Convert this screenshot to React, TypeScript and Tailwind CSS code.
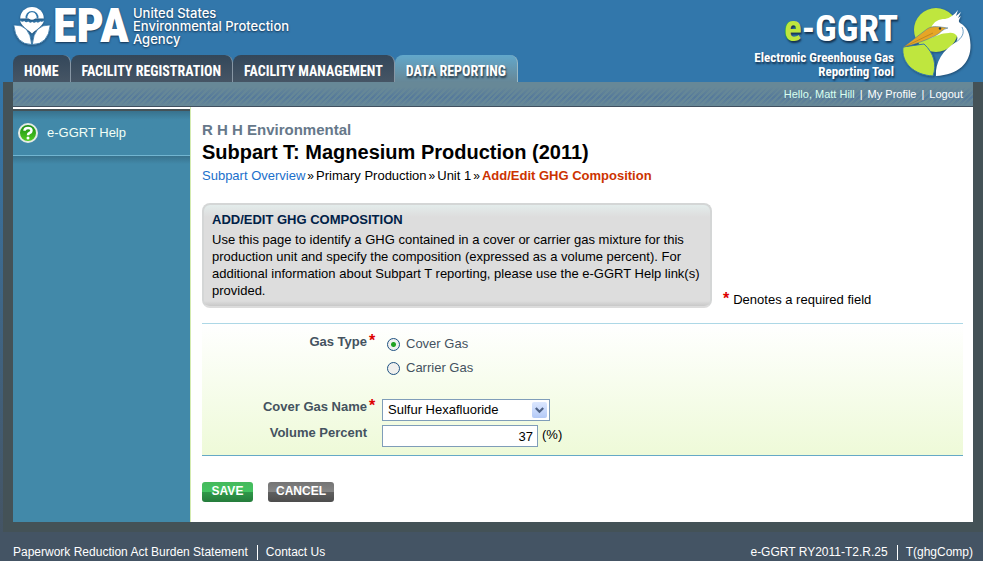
import React from 'react';

const tabs = [
  { label: 'HOME', active: false },
  { label: 'FACILITY REGISTRATION', active: false },
  { label: 'FACILITY MANAGEMENT', active: false },
  { label: 'DATA REPORTING', active: true },
];

const EpaLogo: React.FC = () => (
  <a href="#epa" className="flex text-white" aria-label="United States Environmental Protection Agency">
    <svg width="38" height="40" viewBox="0 0 38 40" className="drop-shadow-[0_1px_1px_rgba(20,50,80,0.6)]" aria-hidden="true">
      <path d="M7.200 12.500A11.800 11.500 0 0 1 19 1a11.800 11.500 0 0 1 11.800 11.500z" fill="#fff" />
      <path d="M13.500 12.500a5.600 5.600 0 1 1 11 0" fill="none" stroke="#3277ab" strokeWidth="1.800" />
      <circle cx="19" cy="10" r="3.800" fill="#fff" />
      <path
        d="M7.200 14.500q2 2.400 4 .6 2 2.200 4 .4 2 2.200 4 .2 2 2 4 0 2 2 4-.4 2 1.400 3.600-.8C30 20 25 22 19 27.500 13 22 8 20 7.200 14.500z"
        fill="#fff"
      />
      <path
        d="M.8 19Q17 18 18.700 38.500 2.500 38.500.8 19zM37.200 19Q21 18 19.300 38.500 35.500 38.500 37.200 19z"
        fill="#fff"
        stroke="#3277ab"
        strokeWidth=".8"
      />
    </svg>
    <span className="w-[80px] text-center font-['Roboto_Condensed','Roboto',sans-serif] text-[48px] leading-[40px] font-black text-shadow-[0_1px_2px_rgb(20_50_80)]">
      EPA
    </span>
    <span className="pt-px pl-[2px] font-['Inter','Liberation_Sans',sans-serif] text-[13px] leading-[13px] font-medium text-shadow-[0_1px_2px_rgb(20_50_80)]">
      United States
      <br />
      Environmental Protection
      <br />
      Agency
    </span>
  </a>
);

const HeronLogo: React.FC = () => (
  <svg width="70" height="72" viewBox="0 0 70 72" className="drop-shadow-[1px_1px_1px_rgba(20,50,80,0.6)]" aria-hidden="true">
    <circle cx="34" cy="23" r="22" fill="#bfe63e" />
    <path d="M1 40C-1 56 12 68 31 69C35 58 32 46 22 37z" fill="#bfe63e" stroke="#3277ab" strokeWidth="1" />
    <path
      d="M29 21C32 14 37 12 43 12C48 11 52 8 56 3L54 9L59 5L56 11L59 9C57 13 56 14 58 16C65 20 68 26 68.500 38C69 56 56 68 34 69C33 55 41 43 54 35C58 30 53 25 47 26C39 26 35 29 26 32z"
      fill="#fff"
    />
    <path d="M54 35C60 31 63 26 60 20" fill="none" stroke="#3277ab" strokeWidth=".7" />
    <path d="M1.500 40L25 22C31 18 38 20 46 21C40 22 39 26 33 29C24 33 12 38 1.500 40z" fill="#e6a526" stroke="#3277ab" strokeWidth=".5" />
    <path d="M3 39.500L31 26" fill="none" stroke="#a8741a" strokeWidth=".6" />
    <circle cx="38" cy="21.500" r="1.200" fill="#243a4c" />
  </svg>
);

const HelpIcon: React.FC = () => (
  <svg width="22" height="22" viewBox="0 0 22 22" aria-hidden="true">
    <defs>
      <linearGradient id="help" x1="0" y1="0" x2="0" y2="1">
        <stop offset="0" stopColor="#188a12" />
        <stop offset="1" stopColor="#53cf22" />
      </linearGradient>
    </defs>
    <circle cx="11" cy="11" r="9" fill="url(#help)" stroke="#e6ece4" strokeWidth="2" />
    <path d="M7.500 8.800Q7.500 6 11 6T14.500 8.700Q14.500 10.200 12.500 11Q11 11.600 11 13.200" fill="none" stroke="#fff" strokeWidth="2.500" />
    <circle cx="11" cy="15.900" r="1.500" fill="#fff" />
  </svg>
);

const Required: React.FC = () => <span className="text-[16px] leading-[14px] font-bold text-[#dd0000]">*</span>;

interface RowProps {
  label: string;
  htmlFor: string;
  required?: boolean;
  children: React.ReactNode;
}

const Row: React.FC<RowProps> = ({ label, htmlFor, required, children }) => (
  <div className="flex items-start">
    <label htmlFor={htmlFor} className="flex w-[175px] shrink-0 justify-end text-[13px] leading-4 font-bold text-[#44525f]">
      {label}
      <span className="flex w-[10px] items-start pl-[2px]">{required && <Required />}</span>
    </label>
    <div className="pl-[5px]">{children}</div>
  </div>
);

const radioClass =
  'size-[13px] appearance-none rounded-full border border-[#1f5282] bg-[#f0f0ee] checked:bg-[radial-gradient(circle,#21a121_0_2px,#f0f0ee_3px)]';

export default function App() {
  return (
    <div className="flex min-h-screen flex-col bg-[#445464] font-['Liberation_Sans',Arial,sans-serif] text-[13px] text-black">
      <header className="flex h-[82px] justify-between bg-[#3277ab] pr-[11px] pl-[13px]">
        <div className="flex flex-col justify-between">
          <div className="pt-[6px]">
            <EpaLogo />
          </div>
          <nav className="flex font-['Roboto_Condensed','Roboto',sans-serif] text-[14px] font-bold text-white">
            {tabs.map((tab) => (
              <a
                key={tab.label}
                href="#tab"
                className={
                  tab.active
                    ? 'flex h-[27px] items-center rounded-t-lg border-r border-[#9bb9c4] bg-linear-to-b from-[#62a8cb] to-[#668797] px-[11px] pt-[5px] whitespace-nowrap text-shadow-[1px_2px_2px_rgb(40_60_75)]'
                    : 'flex h-[27px] items-center rounded-t-lg border-r border-[#8796a4] bg-linear-to-b from-[#33475a] to-[#465565] px-[11px] pt-[5px] whitespace-nowrap'
                }
              >
                {tab.label}
              </a>
            ))}
          </nav>
        </div>
        <div className="flex gap-1 pt-[7px] text-white">
          <div className="text-right font-['Roboto_Condensed','Roboto',sans-serif] font-bold text-shadow-[1px_2px_2px_rgb(20_50_80)]">
            <div className="text-[37px] leading-[44px]">
              <span className="text-[#bfe63e]">e</span>-GGRT
            </div>
            <div className="pr-1 text-[13px] leading-[14px]">
              Electronic Greenhouse Gas
              <br />
              Reporting Tool
            </div>
          </div>
          <HeronLogo />
        </div>
      </header>

      <div className="flex grow bg-linear-to-b from-[#3277ab] to-[#445464] pl-[3px]">
        <div className="flex grow flex-col bg-[#445257] px-[10px] pb-[10px]">
          <div className="flex h-[25px] items-center justify-end gap-[5px] border-b border-[#405060] bg-[linear-gradient(#678897_20%,#67889700_65%,#678897),repeating-linear-gradient(135deg,#55799b_0_2px,#648797_2px_4px)] pr-[10px] text-[11px] text-white">
            <span className="text-[#d9fff0]">Hello, Matt Hill</span>
            <span>|</span>
            <a href="#profile">My Profile</a>
            <span>|</span>
            <a href="#logout">Logout</a>
          </div>

          <div className="flex grow bg-white">
            <aside className="mt-[2px] w-[177px] shrink-0 bg-[#4289a9]">
              <a
                href="#help"
                className="flex h-[47px] items-center gap-2 border-t-2 border-b border-t-[#445257] border-b-[#72b5d1] bg-linear-to-b from-[#38728d] via-[#4289a9] via-20% to-[#4289a9] pl-1 text-[#f2fff6]"
              >
                <HelpIcon />
                e-GGRT Help
              </a>
              <div className="h-2 bg-linear-to-b from-[#38728d] to-[#4289a9]" />
            </aside>

            <main className="min-w-0 grow border-l border-[#d4ebb0] pt-[15px] pr-[10px] pb-5 pl-[11px]">
              <p className="text-[15px] leading-4 font-bold text-[#66788a]">R H H Environmental</p>
              <h1 className="text-[20px] leading-7 font-bold">Subpart T: Magnesium Production (2011)</h1>
              <nav className="flex gap-[2px] text-[13px] leading-5">
                <a href="#overview" className="text-[#1a6fcb]">Subpart Overview</a>
                <span className="text-[12px]">»</span>
                <span>Primary Production</span>
                <span className="text-[12px]">»</span>
                <span>Unit 1</span>
                <span className="text-[12px]">»</span>
                <span className="font-bold text-[#cc3300]">Add/Edit GHG Composition</span>
              </nav>

              <div className="mt-[17px] flex items-end gap-[11px]">
                <section className="w-[510px] rounded-lg border-2 border-[#d4d6d6] border-b-[#dcdcdc] bg-[linear-gradient(#e3eceb,#dddddd_12px,#dddddd_calc(100%-5px),#c8c8c8)] px-2 pt-[7px] pb-[7px]">
                  <h2 className="text-[13px] leading-4 font-bold text-[#002147]">ADD/EDIT GHG COMPOSITION</h2>
                  <p className="pt-[3px] text-[13px] leading-[17px]">
                    Use this page to identify a GHG contained in a cover or carrier gas mixture for this production unit
                    and specify the composition (expressed as a volume percent). For additional information about Subpart
                    T reporting, please use the e-GGRT Help link(s) provided.
                  </p>
                </section>
                <p className="flex items-start gap-1 leading-4">
                  <Required />
                  Denotes a required field
                </p>
              </div>

              <form onSubmit={(e) => e.preventDefault()}>
                <div className="mt-[15px] border-t border-b border-t-[#add8e6] border-b-[#65a9c6] bg-linear-to-b from-white to-[#eefad8] pt-[10px] pb-2">
                  <Row label="Gas Type" htmlFor="cover" required>
                    <div className="flex flex-col gap-2 pt-[2px] pl-[5px] leading-4 text-[#44525f]">
                      <label className="flex items-center gap-[6px]">
                        <input id="cover" type="radio" name="gasType" defaultChecked className={radioClass} />
                        Cover Gas
                      </label>
                      <label className="flex items-center gap-[6px]">
                        <input type="radio" name="gasType" className={radioClass} />
                        Carrier Gas
                      </label>
                    </div>
                  </Row>
                  <div className="h-[23px]" />
                  <Row label="Cover Gas Name" htmlFor="gasName" required>
                    <div className="relative w-[168px]">
                      <select
                        id="gasName"
                        className="block h-[22px] w-full appearance-none border border-[#7f9db9] bg-white pl-[5px] text-[13px]"
                      >
                        <option>Sulfur Hexafluoride</option>
                      </select>
                      <span className="pointer-events-none absolute top-[3px] right-[3px] flex h-4 w-[15px] items-center justify-center rounded-xs bg-linear-to-b from-[#dce7fe] to-[#b4caf7]">
                        <svg width="9" height="7" viewBox="0 0 9 7" fill="none" stroke="#4d6185" strokeWidth="2.200">
                          <path d="M.8 1l3.700 3.700L8.200 1" />
                        </svg>
                      </span>
                    </div>
                  </Row>
                  <div className="h-1" />
                  <Row label="Volume Percent" htmlFor="percent">
                    <div className="flex gap-1 leading-5">
                      <input
                        id="percent"
                        type="text"
                        defaultValue="37"
                        className="h-[22px] w-[156px] border border-[#7f9db9] bg-white pr-1 text-right text-[13px]"
                      />
                      (%)
                    </div>
                  </Row>
                </div>

                <div className="flex gap-[15px] pt-[26px] text-[12px] font-bold text-white">
                  <button
                    type="submit"
                    className="h-5 w-[51px] rounded-[3px] bg-[linear-gradient(#45b95c,#43c461_50%,#2f9949_50%,#257c3c)] pb-[2px] leading-4"
                  >
                    SAVE
                  </button>
                  <button
                    type="button"
                    className="h-5 w-[66px] rounded-[3px] bg-[linear-gradient(#747474,#858585_50%,#606060_50%,#4d4d4d)] pb-[2px] leading-4"
                  >
                    CANCEL
                  </button>
                </div>
              </form>
            </main>
          </div>
        </div>
      </div>

      <footer className="flex items-center justify-between pt-[13px] pr-[10px] pb-px pl-[13px] text-[12px] leading-[15px] text-white">
        <div className="flex">
          <a href="#paperwork" className="border-r border-white pr-[9px]">Paperwork Reduction Act Burden Statement</a>
          <a href="#contact" className="pl-2">Contact Us</a>
        </div>
        <div className="flex">
          <span className="border-r border-white pr-[9px]">e-GGRT RY2011-T2.R.25</span>
          <span className="pl-2">T(ghgComp)</span>
        </div>
      </footer>
    </div>
  );
}
